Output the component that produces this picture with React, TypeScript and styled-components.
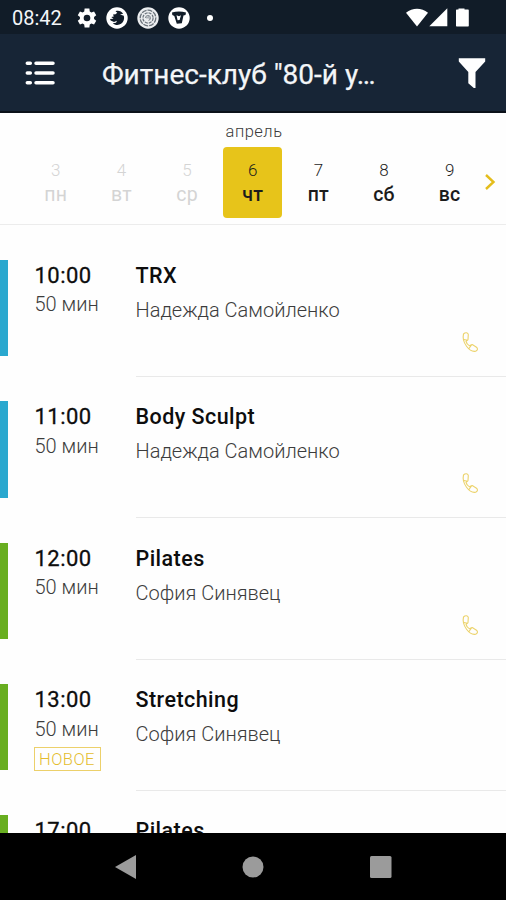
import React from "react";
import styled, { createGlobalStyle } from "styled-components";

const GlobalStyle = createGlobalStyle`
  * { box-sizing: border-box; }
  body { margin: 0; background: #fff; font-family: Roboto, "Liberation Sans", sans-serif; }
`;

const Screen = styled.div`
  width: 506px;
  height: 900px;
  display: flex;
  flex-direction: column;
  overflow: hidden;
  background: #fefefe;
`;

const StatusBar = styled.div`
  flex: none;
  height: 34px;
  display: flex;
  align-items: center;
  padding: 1px 36px 0 12px;
  background: #111c28;
  color: #f4f6f8;
`;

const Clock = styled.span`
  width: 65px;
  font-size: 20px;
  line-height: 34px;
`;

const StatusIcons = styled.div`
  display: flex;
  align-items: center;
  gap: 9px;
  flex: 1;
`;

const Dot = styled.span`
  width: 6px;
  height: 6px;
  margin-left: 8px;
  border-radius: 50%;
  background: #fff;
`;

const SystemIcons = styled.div`
  display: flex;
  align-items: center;
`;

const Header = styled.header`
  flex: none;
  height: 79px;
  display: flex;
  align-items: center;
  padding: 1px 20px 0 25px;
  background: #172536;
  border-bottom: 2px solid #0b1119;
`;

const Title = styled.h1`
  flex: 1;
  margin: 4px 0 0 47px;
  color: #f4f6f8;
  font-size: 28px;
  line-height: 32px;
  font-weight: 400;
  -webkit-text-stroke: 0.25px #f4f6f8;
  white-space: nowrap;
`;

const Calendar = styled.section`
  flex: none;
  height: 112px;
  border-bottom: 1.5px solid #ececec;
`;

const Month = styled.div`
  height: 33.5px;
  padding: 9px 0 0 2px;
  text-align: center;
  color: #3a3a3a;
  font-size: 16.5px;
  line-height: 20px;
  font-weight: 300;
  letter-spacing: 0.5px;
`;

const Days = styled.div`
  display: flex;
  align-items: center;
  padding-left: 26.3px;
`;

const Day = styled.div<{ $state: "past" | "active" | "next" }>`
  flex: none;
  width: 59px;
  height: 71px;
  margin-right: 6.65px;
  padding-top: 12px;
  border-radius: 4px;
  text-align: center;
  background: ${(p) => (p.$state === "active" ? "#e7c41a" : "transparent")};
  color: ${(p) => (p.$state === "past" ? "#d4d4d4" : "#1c1c1c")};
`;

const DayNumber = styled.div`
  font-size: 17px;
  line-height: 22px;
  font-weight: 300;
`;

const DayName = styled.div<{ $muted: boolean }>`
  margin-top: 2.5px;
  font-size: 19.5px;
  line-height: 24px;
  font-weight: ${(p) => (p.$muted ? 400 : 500)};
  letter-spacing: 0.3px;
`;

const NextArrow = styled.svg`
  flex: none;
  width: 12px;
  height: 18px;
  margin-left: -2px;
`;

const List = styled.main`
  flex: 1;
  min-height: 0;
  overflow: hidden;
  padding-top: 10px;
`;

const Row = styled.article<{ $height: number }>`
  height: ${(p) => p.$height}px;
  display: flex;
  padding-top: 24.7px;
`;

const Stripe = styled.div<{ $color: string }>`
  width: 7.5px;
  margin-bottom: 20.7px;
  background: ${(p) => p.$color};
`;

const TimeColumn = styled.div`
  width: 128px;
  padding-left: 27px;
`;

const Heading = styled.div`
  padding-top: 3px;
  color: #0d0d0d;
  font-size: 21.5px;
  line-height: 26px;
  font-weight: 500;
  letter-spacing: 0.45px;
  white-space: nowrap;
`;

const Time = styled(Heading)`
  font-size: 22px;
  font-weight: 400;
  -webkit-text-stroke: 0.3px #0d0d0d;
`;

const Subtle = styled.div<{ $gap?: number }>`
  margin-top: ${(p) => p.$gap ?? 2.5}px;
  color: #3c3c3c;
  font-size: 20px;
  line-height: 26px;
  font-weight: 300;
  white-space: nowrap;
`;

const NewBadge = styled.div`
  width: 67px;
  height: 24px;
  margin: 5px 0 0 -1px;
  border: 1.5px solid #ecd06a;
  color: #e4bd2f;
  font-size: 16.5px;
  line-height: 24px;
  font-weight: 300;
  letter-spacing: 0.5px;
  text-align: center;
`;

const Details = styled.div`
  flex: 1;
  display: flex;
  flex-direction: column;
  border-bottom: 1.5px solid #e9e9e9;
`;

const Phone = styled.svg`
  width: 18px;
  height: 22px;
  margin: 8px 27px 0 auto;
`;

const NavBar = styled.nav`
  flex: none;
  height: 67px;
  display: flex;
  align-items: center;
  justify-content: center;
  gap: 106px;
  background: #000;
`;

const LESSONS = [
  { time: "10:00", name: "TRX", coach: "Надежда Самойленко", color: "#2aa8cf", call: true },
  { time: "11:00", name: "Body Sculpt", coach: "Надежда Самойленко", color: "#2aa8cf", call: true },
  { time: "12:00", name: "Pilates", coach: "София Синявец", color: "#68ae20", call: true },
  { time: "13:00", name: "Stretching", coach: "София Синявец", color: "#68ae20", isNew: true },
  { time: "17:00", name: "Pilates", color: "#68ae20" },
];

const WEEK = ["пн", "вт", "ср", "чт", "пт", "сб", "вс"];

function NotificationIcons() {
  return (
    <StatusIcons>
      <svg width="20" height="20" viewBox="1.5 1.5 21 21" fill="#fff">
        <path
          fillRule="evenodd"
          d="M19.4 13a7.8 7.8 0 0 0 0-2l2.3-1.8-2.3-4-2.8 1.1a8 8 0 0 0-1.7-1L14.5 2h-5l-.4 3.3a8 8 0 0 0-1.7 1L4.6 5.2l-2.3 4L4.6 11a7.8 7.8 0 0 0 0 2l-2.3 1.8 2.3 4 2.8-1.1a8 8 0 0 0 1.7 1l.4 3.3h5l.4-3.3a8 8 0 0 0 1.7-1l2.8 1.1 2.3-4zM12 15.5a3.5 3.5 0 1 1 0-7 3.5 3.5 0 0 1 0 7z"
        />
      </svg>
      <svg width="22" height="22" viewBox="0 0 22 22">
        <circle cx="11" cy="11" r="10.7" fill="#fff" />
        <path
          fill="#111c28"
          d="M9.500 4.200c3-1 6 0 7.600 2.500L14 7.500l3.800 1.300c.9 3-.1 6.300-2.700 8-2.600 1.700-6 1.500-8.300-.6l3.200-.4 1-2-3 1.300-3.300-1.600L4 12l3.500-.2L5.300 10l2.500-.5L7 7.500l2.500-.2 1.800-1.500z"
        />
      </svg>
      <svg width="22" height="22" viewBox="0 0 22 22" fill="none">
        <circle cx="11" cy="11" r="10.7" fill="#eceef0" />
        <circle cx="11" cy="11" r="7.8" stroke="#6c747c" strokeWidth="1.3" strokeDasharray="5 1" />
        <circle cx="11" cy="11" r="5.1" stroke="#68717a" strokeWidth="1.2" strokeDasharray="3 1" />
        <path d="M8.500 11a2.500 2.500 0 1 1 3 2.400M10 11.500a1.200 1.200 0 1 1 2 .3" stroke="#7a828a" />
      </svg>
      <svg width="22" height="22" viewBox="0 0 22 22">
        <circle cx="11" cy="11" r="10.7" fill="#fff" />
        <path
          fill="#111c28"
          d="M4 5.500c4.400-1.400 9.600-1.400 14 0L17.500 8l-2 .5-1.700 7.700-5 .6L6.300 9l-2-1z"
        />
        <path fill="#fff" d="M8.500 8.300l2.500 1 2-1-1.400 4.700-2 .2z" />
      </svg>
      <Dot />
    </StatusIcons>
  );
}

export default function App() {
  return (
    <Screen>
      <GlobalStyle />
      <StatusBar>
        <Clock>08:42</Clock>
        <NotificationIcons />
        <SystemIcons>
          <svg width="64" height="20" viewBox="0 0 64 20" fill="#fff">
            <path d="M0 4.700C6.500-.5 15.500-.5 22 4.700L11 18.500z" />
            <path d="M41.300.3v18H23.300z" />
            <path d="M52.500 1.500V.5h6v1h3.300c.7 0 1 .4 1 1v15c0 .7-.3 1-1 1H51c-.7 0-1-.3-1-1v-15c0-.6.3-1 1-1z" />
          </svg>
        </SystemIcons>
      </StatusBar>
      <Header>
        <svg width="30" height="26" viewBox="0 0 30 26" stroke="#fff" strokeWidth="3.5" strokeLinecap="round">
          <path d="M2.300 3.200h3M11 3.200h17M2.300 13h3M11 13h17M2.300 22.800h3M11 22.800h17" />
        </svg>
        <Title>Фитнес-клуб "80-й у…</Title>
        <svg width="28" height="32" viewBox="0 0 28 32" fill="#fff">
          <path d="M.8 1.200h26.400v3.300L17.500 15v16h-1.700l-5.500-4.800V15L.8 4.500z" />
        </svg>
      </Header>
      <Calendar>
        <Month>апрель</Month>
        <Days>
          {WEEK.map((name, i) => (
            <Day key={name} $state={i < 3 ? "past" : i === 3 ? "active" : "next"}>
              <DayNumber>{i + 3}</DayNumber>
              <DayName $muted={i < 3}>{name}</DayName>
            </Day>
          ))}
          <NextArrow viewBox="0 0 12 18" fill="none" stroke="#e4bd1c" strokeWidth="2.4">
            <path d="M2 2l7.500 7L2 16" />
          </NextArrow>
        </Days>
      </Calendar>
      <List>
        {LESSONS.map((l) => (
          <Row key={l.time} $height={l.call ? 141.6 : 131}>
            <Stripe $color={l.color} />
            <TimeColumn>
              <Time>{l.time}</Time>
              {l.coach && <Subtle>50 мин</Subtle>}
              {l.isNew && <NewBadge>НОВОЕ</NewBadge>}
            </TimeColumn>
            <Details>
              <Heading>{l.name}</Heading>
              {l.coach && <Subtle $gap={8}>{l.coach}</Subtle>}
              {l.call && (
                <Phone viewBox="0 0 18 22" fill="none" stroke="#ecd36c" strokeWidth="1.1">
                  <path d="M2.500 3C4.500 1 7 1.500 7.300 3.500L7 8.500C6.800 10 5 9.500 5 10.500c.5 1.800 2 3.500 3.500 4.300 1 .3 1.300-1.600 2.800-1.300l4.200 2.700c1.600 1.200 1.200 3.300-.8 4C8.500 21.500.5 11.500 2.500 3zM3 8.500l3.500.7M8 17.500l2.500-3.500" />
                </Phone>
              )}
            </Details>
          </Row>
        ))}
      </List>
      <NavBar>
        <svg width="21" height="24" viewBox="0 0 21 24"><path d="M21 0v24L0 12z" fill="#9b9b9b" /></svg>
        <svg width="22" height="22" viewBox="0 0 22 22"><circle cx="11" cy="11" r="10.5" fill="#9b9b9b" /></svg>
        <svg width="22" height="22" viewBox="0 0 22 22"><rect width="21.5" height="22" rx="1.5" fill="#9b9b9b" /></svg>
      </NavBar>
    </Screen>
  );
}
